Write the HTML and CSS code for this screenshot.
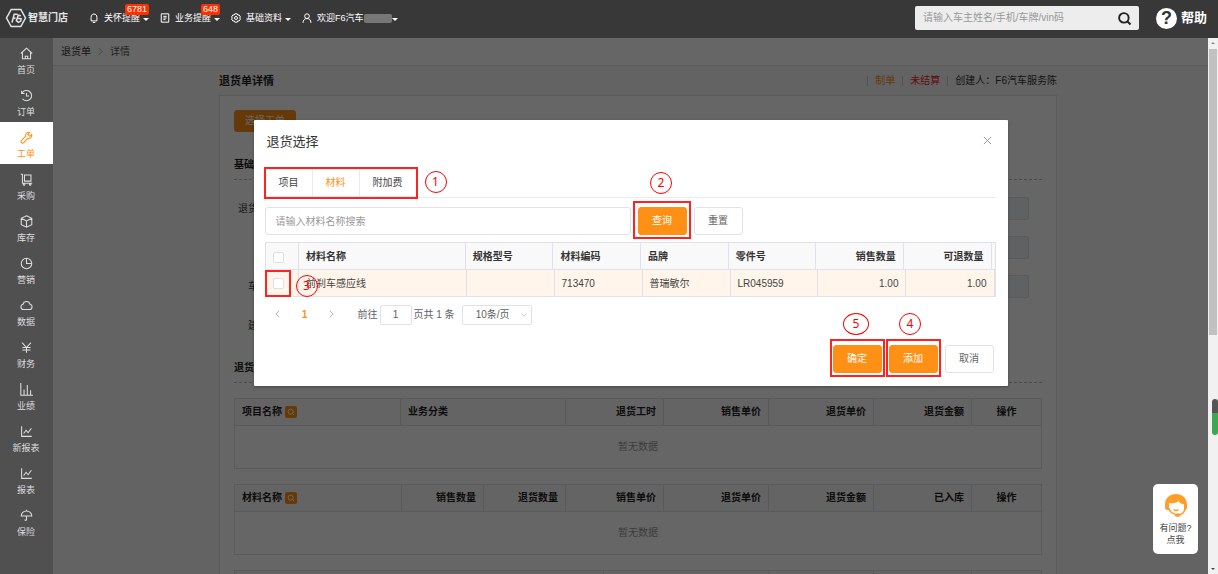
FILE: index.html
```html
<!DOCTYPE html>
<html lang="zh-CN">
<head>
<meta charset="utf-8">
<title>退货单详情</title>
<link rel="stylesheet" href="styles.css">
</head>
<body>
<svg class="defs" aria-hidden="true">
  <symbol id="i-search" viewBox="0 0 12 12"><circle cx="5.5" cy="5.5" r="3.8"/><path d="M8.200 8.200l2.600 2.600"/></symbol>
  <symbol id="i-chart" viewBox="0 0 16 16"><path d="M2 1.500v12.500H14.500M4.500 10.500l3-4 2.500 3 4-5.500"/></symbol>
</svg>
<header class="topbar">
  <a class="brand" href="#">
    <svg class="logo" viewBox="0 0 22 20"><path d="M6.200 1.500h9.600L20.500 10l-4.700 8.500H6.200L1.500 10z"/><path d="M7 14.500l2.200-8.300h3.300M8 10.200h2.600M15.800 7.800l-2.600-.6-1.800 5.500 2 1.600 2.400-1.200.3-2.400-3.500-.4"/></svg>
    <span>智慧门店</span>
  </a>
  <nav class="topnav">
    <a class="toplink" href="#"><svg viewBox="0 0 12 12"><path d="M2.500 9.500V5.200C2.500 2.800 4 1.200 6 1.200s3.500 1.600 3.500 4v4.300zM4.500 11.300h3"/></svg><span>关怀提醒</span><i class="caret"></i><b class="badge">6781</b></a>
    <a class="toplink" href="#"><svg viewBox="0 0 12 12"><path d="M1.500 1h9v10h-9zM4 4h4M4 6h4M4 8h2.500"/></svg><span>业务提醒</span><i class="caret"></i><b class="badge">648</b></a>
    <a class="toplink" href="#"><svg viewBox="0 0 12 12"><path d="M4.500 1h3l.6 1.500 1.700-.2L11.300 4.800 10.400 6l.9 1.300-1.500 2.300-1.700-.2L7.500 11h-3l-.7-1.600-1.600.2L.7 7.300 1.600 6 .7 4.800l1.500-2.500 1.600.2z"/><circle cx="6" cy="6" r="1.800"/></svg><span>基础资料</span><i class="caret"></i></a>
    <a class="toplink" href="#"><svg viewBox="0 0 12 12"><circle cx="6" cy="3.800" r="2.800"/><path d="M1.200 11.800C1.200 8.500 3.300 6.600 6 6.600s4.800 1.900 4.800 5.200"/></svg><span class="user">欢迎F6汽车<span class="masked"></span></span><i class="caret tight"></i></a>
  </nav>
  <form class="search">
    <input type="search" aria-label="搜索" placeholder="请输入车主姓名/手机/车牌/vin码">
    <button type="button" aria-label="搜索"><svg viewBox="0 0 12 12"><use href="#i-search"/></svg></button>
  </form>
  <a class="help" href="#"><span class="help-icon">?</span>帮助</a>
</header>
<div class="shell">
  <nav class="sidebar">
    <a href="#"><svg viewBox="0 0 16 16"><path d="M1 8L8 1.500 15 8M3 6.500V14.500h10V6.500M6.500 14.500v-3h3v3"/></svg>首页</a>
    <a href="#"><svg viewBox="0 0 16 16"><path d="M2.500 5A6.300 6.300 0 1 1 3 12M2 2v3.500h3.500M8 5v3.500h3"/></svg>订单</a>
    <a class="active" href="#"><svg viewBox="0 0 16 16"><path d="M14.300 4.200l-2.400 2.400-2.300-2.300L12 1.900C9 .8 6.300 3.300 7 6.400L1.900 11.500a1.800 1.800 0 0 0 2.700 2.700L9.700 9.100c3.200.7 5.700-2 4.600-4.900z"/></svg>工单</a>
    <a href="#"><svg viewBox="0 0 16 16"><path d="M1 1.500h2v11h12M5.500 2.500h8v7.500h-8z"/><circle cx="5" cy="14" r="1"/><circle cx="12.500" cy="14" r="1"/></svg>采购</a>
    <a href="#"><svg viewBox="0 0 16 16"><path d="M8 1l6.500 3v8L8 15l-6.500-3V4zM1.500 4L8 7.200 14.500 4M8 7.200V15"/></svg>库存</a>
    <a href="#"><svg viewBox="0 0 16 16"><circle cx="8" cy="8" r="6.500"/><path d="M8 1.500V8h6.500"/></svg>营销</a>
    <a href="#"><svg viewBox="0 0 16 16"><path d="M4.200 13a3.300 3.300 0 0 1-.5-6.500 4.400 4.400 0 0 1 8.600 0 3.300 3.300 0 0 1-.5 6.500z"/></svg>数据</a>
    <a href="#"><svg viewBox="0 0 16 16"><path d="M2.500 2L8 8l5.500-6M8 8v6.500M3 8h10M3 11h10"/></svg>财务</a>
    <a href="#"><svg viewBox="0 0 16 16"><path d="M1 0v15H16M5 14.500V8M9 14.500V2.500M13 14.500V9"/></svg>业绩</a>
    <a href="#"><svg viewBox="0 0 16 16"><use href="#i-chart"/></svg>新报表</a>
    <a href="#"><svg viewBox="0 0 16 16"><use href="#i-chart"/></svg>报表</a>
    <a href="#"><svg viewBox="0 0 16 16"><path d="M1.500 8.500a6.500 6 0 0 1 13 0zM8 1v1.500M8 8.500v5M6 13a1 1 0 0 0 2 0"/></svg>保险</a>
  </nav>
  <main class="main">
    <div class="crumbs"><a href="#">退货单</a><svg viewBox="0 0 6 10"><path d="M1 1l4 4-4 4"/></svg><span>详情</span></div>
    <div class="page">
      <div class="page-head">
        <h1>退货单详情</h1>
        <ul class="meta"><li class="draft">制单</li><li class="unpaid">未结算</li><li>创建人：F6汽车服务陈</li></ul>
      </div>
      <section class="panel">
        <button class="btn primary pick" type="button">选择工单</button>
        <h2>基础信息</h2>
        <div class="fields">
          <label><span>退货单号</span><input disabled></label>
          <label><span></span><input disabled aria-label="客户"></label>
          <label><span class="plate">车牌</span><input disabled></label>
          <label><span class="plate">建单日期</span></label>
        </div>
        <h2>退货明细</h2>
        <table class="grid">
          <thead><tr><th>项目名称 <svg class="mag" viewBox="0 0 12 12"><use href="#i-search"/></svg></th><th class="w-kind">业务分类</th><th class="w-qty num">退货工时</th><th class="w-price num">销售单价</th><th class="w-price num">退货单价</th><th class="w-qty num">退货金额</th><th class="w-act">操作</th></tr></thead>
          <tbody><tr><td colspan="7">暂无数据</td></tr></tbody>
        </table>
        <table class="grid">
          <thead><tr><th>材料名称 <svg class="mag" viewBox="0 0 12 12"><use href="#i-search"/></svg></th><th class="w-half num">销售数量</th><th class="w-half num">退货数量</th><th class="w-qty num">销售单价</th><th class="w-price num">退货单价</th><th class="w-price num">退货金额</th><th class="w-qty num">已入库</th><th class="w-act">操作</th></tr></thead>
          <tbody><tr><td colspan="8">暂无数据</td></tr></tbody>
        </table>
        <table class="grid">
          <thead><tr><th>附加费名称</th><th class="w-kind"></th><th class="w-price num">退货金额</th><th class="w-qty">备注</th><th class="w-act">操作</th></tr></thead>
        </table>
      </section>
    </div>
    <div class="mask">
      <div class="dialog" role="dialog" aria-labelledby="dlg-title">
        <div class="dialog-head"><h2 id="dlg-title">退货选择</h2><button class="close" type="button" aria-label="关闭"><svg viewBox="0 0 10 10"><path d="M1 1l8 8M9 1L1 9"/></svg></button></div>
        <div class="tabs">
          <div class="tablist marked"><button type="button">项目</button><button class="on" type="button">材料</button><button type="button">附加费</button><b class="step step-side">1</b></div>
        </div>
        <div class="query">
          <input type="text" aria-label="材料名称" placeholder="请输入材料名称搜索">
          <div class="marked mark-query"><button class="btn primary" type="button">查询</button><b class="step">2</b></div>
          <button class="btn" type="button">重置</button>
        </div>
        <table class="parts">
          <thead><tr><th class="c-check"><input type="checkbox" aria-label="全选"></th><th class="c-name">材料名称</th><th>规格型号</th><th>材料编码</th><th>品牌</th><th>零件号</th><th class="num">销售数量</th><th class="num">可退数量</th></tr></thead>
          <tbody><tr><td class="c-check marked"><input type="checkbox" aria-label="选择前刹车感应线"><b class="step step-row">3</b></td><td class="c-name">前刹车感应线</td><td></td><td>713470</td><td>普瑞敏尔</td><td>LR045959</td><td class="num">1.00</td><td class="num">1.00</td></tr></tbody>
        </table>
        <div class="pager">
          <button type="button" aria-label="上一页"><svg viewBox="0 0 6 10"><path d="M5 1L1 5l4 4"/></svg></button>
          <button class="current" type="button">1</button>
          <button type="button" aria-label="下一页"><svg viewBox="0 0 6 10"><path d="M1 1l4 4-4 4"/></svg></button>
          <label class="jump" for="page-no">前往</label><input id="page-no" type="text" value="1"><span>页共 1 条</span>
          <span class="size"><select aria-label="每页条数"><option>10条/页</option></select><svg viewBox="0 0 10 6"><path d="M1 1l4 4 4-4"/></svg></span>
        </div>
        <div class="actions">
          <div class="marked mark-act"><button class="btn primary" type="button">确定</button><b class="step wide">5</b></div>
          <div class="marked mark-act"><button class="btn primary" type="button">添加</button><b class="step">4</b></div>
          <button class="btn" type="button">取消</button>
        </div>
      </div>
    </div>
    <a class="service" href="#">
      <svg viewBox="0 0 24 24"><path class="hair" d="M1 12C1 5 5.500 1 12 1s11 4 11 11v3c0 1.500-1 2-3 2V11C16.500 11 15.500 9.500 14.500 8 12 10.500 8 10.500 5 10v7c-3 0-4-.5-4-2.500z"/><path class="cord" d="M21 15c0 4-3 6.500-7 7M9.500 16.500c1.500 1.200 3.500 1.200 5 0M5 15c.5 3.500 3 5.500 6 6"/><ellipse class="hair" cx="13.500" cy="22" rx="3" ry="1.800"/></svg>
      <span>有问题?</span><span>点我</span>
    </a>
  </main>
  <div class="scroll" aria-hidden="true"><i class="up"></i><span class="thumb"></span><span class="meter"></span><i class="down"></i></div>
</div>
</body>
</html>
```
FILE: styles.css
```css
* { box-sizing: border-box; }
body, h1, h2, ul { margin: 0; padding: 0; }
body {
  height: 100vh; display: flex; flex-direction: column; overflow: hidden;
  font: 10px/14px "Liberation Sans", "Noto Sans CJK SC", sans-serif; color: #444; background: #f7f7f7;
}
a { color: inherit; text-decoration: none; }
button, input, select { font: inherit; color: inherit; margin: 0; }
svg { fill: none; stroke: currentColor; flex: none; }
.defs { position: absolute; width: 0; height: 0; }

.topbar { height: 38px; flex: none; display: flex; align-items: center; padding: 0 11px 2px 5px; background: #383838; color: #fff; }
.brand { display: flex; align-items: center; gap: 1px; font-weight: bold; color: #e4e4e4; }
.logo { width: 22px; height: 20px; stroke-width: 1.5; }
.topnav { display: flex; gap: 11px; margin-left: 21px; flex: 1; font-size: 9px; }
.toplink { position: relative; display: flex; align-items: center; }
.toplink svg { width: 10px; height: 10px; margin-right: 5px; stroke-width: 1.2; }
.caret { border: 3px solid transparent; border-top-color: #fff; border-bottom: 0; margin: 2px 0 0 3px; }
.caret.tight { margin-left: 0; }
.badge { position: absolute; right: 0; top: -7px; padding: 0 2px; border-radius: 2px; background: #ff3000; font-size: 9px; line-height: 11px; font-weight: normal; }
.user { display: flex; align-items: center; }
.masked { width: 28px; height: 9px; border-radius: 2px; background: #777; }
.search { display: flex; width: 224px; height: 24px; background: #ededed; border-radius: 2px; color: #222; }
.search input { flex: 1; min-width: 0; border: 0; padding: 0 8px; background: none; outline: 0; }
.search input::placeholder, .query input::placeholder { color: #999; opacity: 1; }
.search button { width: 28px; border: 0; background: none; padding: 0; }
.search svg { display: block; width: 15px; height: 15px; margin: auto; stroke-width: 1.5; }
.help { display: flex; align-items: center; gap: 4px; margin-left: 17px; font-size: 13px; font-weight: bold; }
.help-icon { width: 21px; height: 21px; border-radius: 50%; background: #fff; color: #333; font-size: 18px; line-height: 21px; text-align: center; }

.shell { flex: 1; display: flex; min-height: 0; }
.sidebar { width: 53px; flex: none; background: #505050; color: #ddd; font-size: 9px; overflow: hidden; }
.sidebar a { height: 42px; display: flex; flex-direction: column; align-items: center; padding: 9px 1px 0 0; gap: 4px; line-height: 12px; }
.sidebar svg { width: 13px; height: 13px; stroke-width: 1.3; }
.sidebar .active { background: #fff; color: #ff9016; }
.main { position: relative; flex: 1; min-width: 0; overflow: hidden; background: #f7f7f7; }
.crumbs { height: 28px; display: flex; align-items: center; gap: 7px; padding-left: 8px; border-bottom: 1px solid #e2e2e2; background: #fff; color: #333; }
.crumbs svg { width: 5px; height: 9px; stroke: #999; }
.crumbs span { color: #555; }
.page { padding-left: 15px; }
.page-head { max-width: 838px; height: 29px; margin: 0 auto; display: flex; align-items: center; justify-content: space-between; }
h1 { font-size: 11px; color: #222; }
.meta { list-style: none; display: flex; color: #333; }
.meta li { padding-left: 7px; margin-left: 7px; border-left: 1px solid #ccc; line-height: 10px; }
.meta .draft { color: #ff9016; }
.meta .unpaid { color: #f5222d; }
.panel { max-width: 838px; margin: 0 auto; padding: 14px; border: 1px solid #e2e2e2; background: #fff; }
.panel h2 { font-size: 10px; line-height: 14px; padding-bottom: 7px; border-bottom: 1px dashed #bbb; color: #222; }
.fields { display: flex; flex-direction: column; gap: 16px; padding: 17px 13px 0 4px; margin-bottom: 24px; }
.fields label { display: flex; align-items: center; justify-content: space-between; height: 23px; }
.fields .plate { padding-left: 10px; }
.fields input { width: 88%; height: 23px; border: 1px solid #dde0e6; border-radius: 2px; background: #f0f3f8; }

.btn { height: 28px; padding: 0; width: 49px; border: 1px solid #dfe2e9; border-radius: 3px; background: #fff; color: #666; white-space: nowrap; }
.btn.primary { border-color: #ff9016; background: #ff9016; color: #fff; }
.btn.pick { width: 62px; height: 22px; margin-bottom: 26px; }
.num { text-align: right !important; }
.grid { width: 100%; margin-top: 15px; table-layout: fixed; border-collapse: collapse; border: 1px solid #dfe1e6; }
.grid th { height: 27px; padding: 0 7px; border: 1px solid #dfe1e6; background: #f9f9f9; color: #222; text-align: left; }
.grid td { height: 43px; padding: 0; text-align: center; color: #999; }
.w-half { width: 82px; }
.w-kind { width: 165px; }
.w-qty { width: 98px; }
.w-price { width: 105px; }
.grid .w-act { width: 70px; text-align: center; }
.mag { width: 12px; height: 12px; padding: 2px; border-radius: 2px; background: #ff9016; color: #fff; vertical-align: -3px; stroke-width: 1.5; }

.mask { position: absolute; inset: 0; padding: 82px 24px 0; background: rgba(0, 0, 0, .6); }
.dialog { max-width: 754px; margin: 0 auto; padding: 13px 12px 13px 11px; border-radius: 1px; background: #fff; box-shadow: 0 1px 3px rgba(0, 0, 0, .3); }
.dialog-head { display: flex; justify-content: space-between; padding: 0 3px 0 2px; height: 36px; }
.dialog-head h2 { font-size: 13px; line-height: 18px; font-weight: normal; color: #333; }
.close { width: 10px; height: 14px; padding: 0; border: 0; background: none; color: #909399; }
.close svg { display: block; width: 9px; height: 9px; margin: auto; }
.tabs { display: flex; height: 29px; margin-bottom: 9px; border-bottom: 1px solid #e8eaf0; }
.tablist { display: flex; border: 1px solid #e8eaf0; }
.tablist button { border: 0; padding: 0 13px; background: none; }
.tablist button + button { border-left: 1px solid #e8eaf0; }
.tablist .on { color: #ff9016; }
.marked { position: relative; }
.marked::after { content: ""; position: absolute; inset: -3px -2px; border: 2px solid #f22; pointer-events: none; }
.mark-query::after { inset: -6px -4px -4px -5px; }
.mark-act::after { inset: -6px -3px -4px; }
.step { position: absolute; left: 50%; bottom: 41px; width: 22px; height: 22px; margin-left: -12px; border: 1px solid #f00; border-radius: 50%; color: #f00; font: 12px/20px "Noto Sans", sans-serif; text-align: center; z-index: 1; }
.mark-act .step { bottom: 38px; margin-left: -14px; }
.step.wide { width: 26px; }
.step-side { left: 100%; bottom: 3px; margin-left: 9px; }
.step-row { left: 30px; bottom: -1px; margin: 0; }
.query { display: flex; gap: 7px; margin-bottom: 7px; }
.query input { flex: 0 1 366px; min-width: 0; height: 28px; padding: 0 10px; border: 1px solid #dfe2e9; border-radius: 3px; }
.parts { display: block; border: 1px solid #dfe2ec; background: #f9f9f9; }
.parts thead, .parts tbody { display: table; table-layout: fixed; border-collapse: collapse; width: 100%; }
.parts thead { width: calc(100% - 3px); }
.parts th, .parts td { height: 26px; padding: 2px 7px 0; border-right: 1px solid #dfe2ec; text-align: left; }
.parts th { color: #333; }
.parts td { background: #fff5eb; border-top: 1px solid #dfe2ec; }
.parts .c-check { width: 33px; padding: 2px 0 0 7px; }
.parts .c-name { width: 23%; }
.c-check input { appearance: none; display: block; margin: 0; width: 11px; height: 11px; border: 1px solid #dcdfe6; border-radius: 2px; background: #fff; }
.parts .marked::after { inset: 0 7px -1px -1px; }
.pager { display: flex; align-items: center; height: 20px; margin-top: 8px; padding-left: 7px; color: #606266; }
.pager button { border: 0; background: none; padding: 0; width: 12px; margin-right: 15px; }
.pager button svg { width: 5px; height: 8px; color: #999; }
.pager .current { color: #ff9016; font-weight: bold; }
.jump { margin-left: 5px; }
.pager input { width: 32px; height: 20px; margin: 0 2px; padding: 0; text-align: center; border: 1px solid #dfe2e9; border-radius: 2px; }
.size { position: relative; margin-left: 7px; }
.size select { appearance: none; display: block; width: 70px; height: 20px; padding: 0 13px; border: 1px solid #dfe2e9; border-radius: 2px; background: #fff; }
.size svg { position: absolute; right: 5px; top: 8px; width: 6px; height: 4px; color: #aaa; pointer-events: none; }
.actions { display: flex; justify-content: flex-end; gap: 7px; margin-top: 20px; padding-right: 2px; }

.service { position: absolute; right: 10px; bottom: 20px; width: 45px; padding: 9px 0 8px; border-radius: 5px; background: #fff; display: flex; flex-direction: column; align-items: center; font-size: 9px; line-height: 12px; }
.service svg { width: 24px; height: 24px; margin-bottom: 5px; }
.hair { fill: #ff9e27; stroke: none; }
.cord { stroke: #ff9e27; stroke-width: 1.5; }
.scroll { position: relative; width: 10px; flex: none; background: #f1f1f1; }
.thumb { position: absolute; inset: 11px 1px auto; height: 286px; background: #c1c1c1; }
.up, .down { position: absolute; left: 3px; border: 2px solid transparent; }
.up { top: 2px; border-bottom-color: #888; }
.down { bottom: 2px; border-top-color: #444; }
.meter { position: absolute; right: 0; top: 361px; width: 6px; height: 36px; border-radius: 3px; background: linear-gradient(#555 40%, #3fa652 40%); }
```
